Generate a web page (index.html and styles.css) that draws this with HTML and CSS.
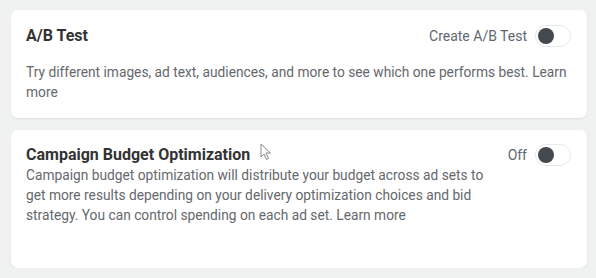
FILE: index.html
```html
<!DOCTYPE html>
<html>
<head>
<meta charset="utf-8">
<link rel="stylesheet" href="styles.css">
</head>
<body>
<div class="page">
  <section class="card card-ab">
    <div class="head">
      <h2 class="title">A/B Test</h2>
      <div class="control">
        <span class="label">Create A/B Test</span>
        <span class="toggle"><span class="knob"></span></span>
      </div>
    </div>
    <p class="desc desc-ab">Try different images, ad text, audiences, and more to see which one performs best. Learn more</p>
  </section>
  <section class="card card-cbo">
    <div class="head">
      <div class="body">
        <h2 class="title">Campaign Budget Optimization</h2>
        <p class="desc desc-cbo">Campaign budget optimization will distribute your budget across ad sets to get more results depending on your delivery optimization choices and bid strategy. You can control spending on each ad set. Learn more</p>
      </div>
      <div class="control">
        <span class="label">Off</span>
        <span class="toggle"><span class="knob"></span></span>
      </div>
    </div>
    <svg class="cursor" width="12" height="18" viewBox="0 0 12 18"><path d="M1 1 L1 14 L4 11 L6.5 16.5 L8.5 15.5 L6 10 L10.5 10 Z" fill="#fff" stroke="#888" stroke-width="1" stroke-linejoin="round"/></svg>
  </section>
</div>
</body>
</html>
```
FILE: styles.css
```css
html, body {
  margin: 0;
  padding: 0;
  background: #f0f2f2;
}
body {
  font-family: Roboto, "Liberation Sans", sans-serif;
  color: #1c1e21;
}
.page {
  padding: 10px 9px 0 11px;
  display: flex;
  flex-direction: column;
  gap: 12px;
}
.card {
  position: relative;
  background: #fff;
  border-radius: 7px;
  box-shadow: 0 1px 2px rgba(0,0,0,0.08);
  padding: 16px 16px 16px 15px;
}
.card-cbo {
  padding-top: 15px;
  box-sizing: border-box;
  height: 138px;
}
.head {
  display: flex;
  justify-content: space-between;
  align-items: flex-start;
}
.title {
  margin: 0;
  font-size: 16px;
  line-height: 20px;
  font-weight: 700;
  color: #333;
}
.control {
  display: flex;
  align-items: center;
  gap: 8px;
  margin-top: -1px;
}
.label {
  font-size: 14px;
  line-height: 22px;
  color: #606770;
}
.toggle {
  width: 36px;
  height: 22px;
  box-sizing: border-box;
  border: 1px solid #e6e8ea;
  border-radius: 11px;
  background: #fff;
  display: flex;
  align-items: center;
  padding-left: 2px;
}
.knob {
  width: 16px;
  height: 16px;
  border-radius: 50%;
  background: #444950;
}
.desc {
  margin: 0;
  font-size: 13.75px;
  line-height: 20px;
  color: #65686d;
}
.desc-ab {
  margin-top: 15px;
}
.desc-cbo {
  width: 470px;
}
.cursor {
  position: absolute;
  left: 249px;
  top: 13px;
}
```
